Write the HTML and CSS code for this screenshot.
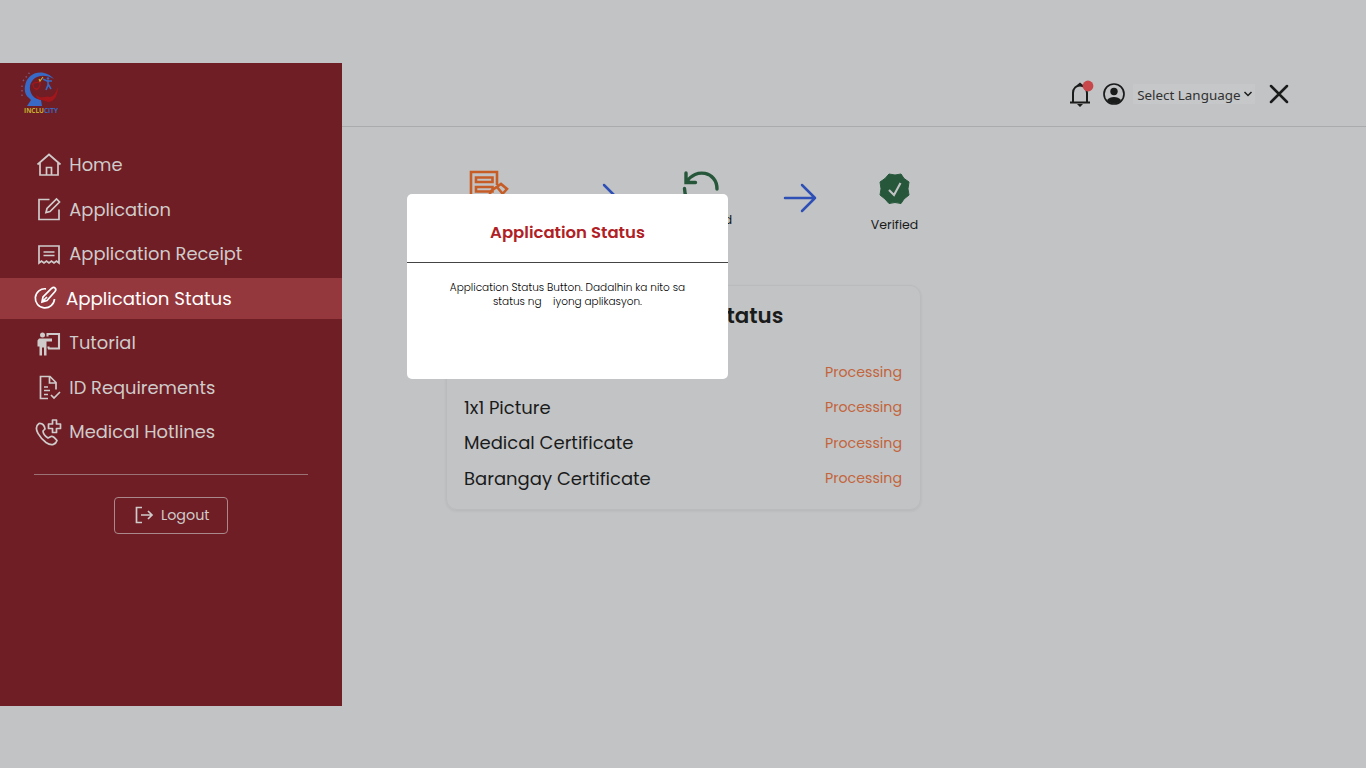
FILE: index.html
```html
<!DOCTYPE html>
<html lang="en">
<head>
<meta charset="utf-8">
<title>Application Status</title>
<link rel="stylesheet" href="styles.css">
</head>
<body>
<div class="app">
  <aside class="sidebar">
    <div class="brand">
      <svg class="logo" width="42" height="46" viewBox="0 0 42 46">
        <path d="M36 9C27-2 9 1 7 16c-1 6 1 10 4 12l2 2-4 6h15l-1-6c-5-1-8-3-10-7C8 12 20 0 36 9Z" fill="#386ac5"/>
        <path d="M18 25c6 5 10 0 13 2 5 0 7-5 9-10 0 7-3 15-10 15l-6-2c-3 0-6-2-6-5Z" fill="#a1171c"/>
        <path d="M14 15c2-5 6 0 7-4 3 4-1 9-4 9M15 14c0 5 2 5 4 4" fill="none" stroke="#a1171c" stroke-width="1.2"/>
        <path d="m21 9 1 2 3-4" fill="none" stroke="#c6ae31" stroke-width="1.2"/>
        <circle cx="30" cy="8.500" r="1.3" fill="#386ac5"/>
        <path d="m25 9 4 2h5M30 10v5l-2 5M30 14l3 5" fill="none" stroke="#386ac5" stroke-width="1.6"/>
        <path d="M4 26V14M5 11l7-9" fill="none" stroke="#7d5471" stroke-width="1.5" stroke-dasharray="1.5 3"/>
        <text x="6" y="43" class="logo-text" textLength="20" lengthAdjust="spacingAndGlyphs" fill="#c6ae31">INCLU</text>
        <text x="26" y="43" class="logo-text" textLength="14" lengthAdjust="spacingAndGlyphs" fill="#386ac5">CITY</text>
      </svg>
    </div>
    <nav class="menu">
      <a class="item home"><svg width="26" height="26" viewBox="0 0 26 26"><path d="m1.500 12.500 11.500-10 11.500 10M4 10.500V23h18V10.500M10.500 23v-7.500h5V23"/></svg><span>Home</span></a>
      <a class="item application"><svg width="26" height="26" viewBox="0 0 26 26"><path d="M13.500 3.500H3V23.500h20V13.500M10 16.500l1-4L20.500 3l3 3L14 15.500Z"/></svg><span>Application</span></a>
      <a class="item receipt"><svg width="26" height="26" viewBox="0 0 26 26"><path d="M3 5h20v17l-2.500-2-2.500 2-2.500-2-2.500 2-2.500-2-2.500 2-2.500-2L3 22ZM7.500 11h11M7.500 14.500h11"/></svg><span>Application Receipt</span></a>
      <a class="item active"><svg width="26" height="26" viewBox="0 0 26 26"><path d="M13 3.800A9.600 9.600 0 1 0 21.500 14M9 17l1-5 8.500-8.500c3-2.500 5.500.500 3.500 3L14 15.500ZM9 17l5-5"/></svg><span>Application Status</span></a>
      <a class="item tutorial"><svg width="26" height="26" viewBox="0 0 26 26"><circle class="solid" cx="6.500" cy="5" r="2.500"/><path class="solid" d="M3 8.500h13v3h-5.500v14H8v-8H6v8H3.500v-9H1.500v-6Z"/><path class="thick" d="M10.500 4h12.500v14.500H12M11.500 4v2.500M12.500 18.500v-2"/></svg><span>Tutorial</span></a>
      <a class="item requirements"><svg width="26" height="26" viewBox="0 0 26 26"><path d="M12 24.500H4.500V2.500h9.500l6 6v7M13.500 3v6H20M8 13h4M8 16.500h6M8 20.500h4M15 21l3 3 6-6"/></svg><span>ID Requirements</span></a>
      <a class="item hotlines"><svg width="28" height="28" viewBox="0 0 28 28"><path d="M5 5.500c-7 5 2 15 7 19 6 4 10 1.500 11-2q-4-5-6-4l-3 1.500c-3-2-5-5-5-7l2-2q-1-6-6-5.500ZM18.500 2h4v4h4v4.500h-4v4h-4v-4h-4V6h4Z" stroke-linejoin="round"/></svg><span>Medical Hotlines</span></a>
    </nav>
    <div class="divider"></div>
    <button class="logout"><svg width="20" height="20" viewBox="0 0 20 20"><path d="M8 2.500H2.500v15H8M7 10h10.500M14 6l4 4-4 4"/></svg><span>Logout</span></button>
  </aside>
  <main class="main">
    <header class="topbar">
      <svg class="bell" width="28" height="30" viewBox="0 0 28 30"><path d="M3 23.500h20M6 23V14c0-10 14-10 14 0v9" fill="none" stroke="#1a1b1b" stroke-width="2"/><path d="M10 25h6l-3 3ZM10 6l3-2.500 3 2.500Z" fill="#1a1b1b"/><circle cx="21" cy="7" r="5.400" fill="#c8474b"/></svg>
      <svg class="user" width="24" height="24" viewBox="0 0 24 24"><circle cx="12" cy="12" r="10" fill="none" stroke="#1a1b1b" stroke-width="1.700"/><circle cx="12" cy="9.500" r="3.700" fill="#1a1b1b"/><path d="M5 18c3-4 11-4 14 0-3 5-11 5-14 0Z" fill="#1a1b1b"/></svg>
      <div class="language"><span>Select Language</span><svg width="10" height="8" viewBox="0 0 10 8"><path d="m1.500 2 3.500 3.500L8.500 2" fill="none" stroke="#1a1b1b" stroke-width="1.500"/></svg></div>
      <svg class="close" width="20" height="20" viewBox="0 0 20 20"><path d="m2 2 16 16M18 2 2 18" fill="none" stroke="#1a1b1b" stroke-width="2.500" stroke-linecap="round"/></svg>
    </header>
    <section class="steps">
      <div class="step form"><svg width="42" height="42" viewBox="0 0 42 42"><path d="M29 16V3H3v36h20M8 8.500h16.500v4.500H8ZM8 18h16.500v4.500H8ZM20 30l3-8 10-7 6 5-10 11ZM29 18l5 6" fill="none" stroke="#c65d27" stroke-width="2.600"/></svg></div>
      <div class="arrow first"><svg width="34" height="30" viewBox="0 0 34 30"><path d="M2 15h30M19 2l13 13-13 13" fill="none" stroke="#2e4fb5" stroke-width="2.500" stroke-linecap="round" stroke-linejoin="round"/></svg></div>
      <div class="step review"><svg width="40" height="40" viewBox="0 0 40 40"><path d="M5 3v9.500h9.500M6 11.500C14-2 36 1 36 19M3.500 18.500c0 15 17 22 28 12" fill="none" stroke="#26573a" stroke-width="3.400" stroke-linecap="round"/></svg><span>Reviewed</span></div>
      <div class="arrow"><svg width="34" height="30" viewBox="0 0 34 30"><path d="M2 15h30M19 2l13 13-13 13" fill="none" stroke="#2e4fb5" stroke-width="2.500" stroke-linecap="round" stroke-linejoin="round"/></svg></div>
      <div class="step verified"><svg width="34" height="34" viewBox="0 0 34 34"><path d="M11 2q6 2 12 0l3 4.500 5 3.500q-2 7 0 13l-5 4-3 4.500q-6-2-12 0l-4-4.500-5-4q2-6 0-13l5-3.500Z" fill="#26573a" stroke="#26573a" stroke-linejoin="round"/><path d="m11 18 5 5L22.500 11" fill="none" stroke="#c2c3c5" stroke-width="2.100"/></svg><span>Verified</span></div>
    </section>
    <section class="card">
      <h2>Application Status</h2>
      <div class="row"><span></span><b>Processing</b></div>
      <div class="row picture"><span>1x1 Picture</span><b>Processing</b></div>
      <div class="row medical"><span>Medical Certificate</span><b>Processing</b></div>
      <div class="row barangay"><span>Barangay Certificate</span><b>Processing</b></div>
    </section>
  </main>
</div>
<div class="modal">
  <h1>Application Status</h1>
  <p><span class="line-one">Application Status Button. Dadalhin ka nito sa</span><br><span class="line-two">status ng &nbsp;&nbsp;&nbsp;iyong aplikasyon.</span></p>
</div>
</body>
</html>
```
FILE: styles.css
```css
* { box-sizing: border-box; }
body { margin: 0; width: 1366px; height: 768px; overflow: hidden; padding-top: 62.5px; background: #c2c3c5; font-family: Poppins, Inter, sans-serif; color: #1a1b1b; }
svg { display: block; flex: none; }
.app { display: flex; height: 643.5px; }
.sidebar { width: 341.5px; flex: none; background: #6e1e24; color: #d0cbcb; }
.brand { height: 82.100px; padding: 7px 0 0 18px; }
.logo-text { font-family: "Open Sans", sans-serif; font-size: 7px; font-weight: 700; }
.menu { display: flex; flex-direction: column; gap: 4px; }
.item { height: 40.5px; display: flex; align-items: center; padding-left: 36px; gap: 7.300px; font-size: 17.850px; white-space: nowrap; }
.item svg, .logout svg { fill: none; stroke: currentColor; stroke-width: 1.7; }
.item .solid { fill: currentColor; stroke: none; }
.item .thick { stroke-width: 2.1; }
.active { background: #95383e; color: #fff; padding-left: 32.700px; font-size: 18.200px; }
.hotlines { padding-left: 34px; }
.divider { width: 273.5px; height: 1px; margin: 21.900px 0 0 34px; background: #9b7377; }
.logout { display: flex; align-items: center; gap: 7px; width: 114px; height: 37px; margin: 22px 0 0 114px; padding: 0 0 0 19px; border: 1px solid #ab888b; border-radius: 4px; background: transparent; color: #d0cbcb; font: 14.300px Poppins, Inter, sans-serif; }
.main { flex: 1; min-width: 0; }
.topbar { height: 64px; display: flex; align-items: center; padding-left: 725.200px; border-bottom: 1.5px solid #aaabad; }
.user { margin-left: 7px; }
.language { display: flex; align-items: center; gap: 3px; width: 122px; height: 20px; margin-left: 7.500px; padding-left: 4px; background: #c6c7c8; font-family: "Noto Sans", sans-serif; font-size: 13.400px; color: #303132; white-space: nowrap; }
.language span { padding-top: 2px; }
.close { margin-left: 14px; }
.steps { display: flex; height: 158px; padding: 42px 0 0 126.500px; }
.step { display: flex; flex-direction: column; align-items: center; font-size: 12.500px; line-height: 18px; }
.form { width: 42px; }
.arrow { width: 34px; margin-top: 14px; }
.arrow.first { margin-left: 75px; }
.review { width: 64px; margin: 1px 50px 0 50px; }
.review span { margin-top: 1px; padding-left: 3px; }
.verified { width: 50px; margin: 3px 0 0 52.500px; gap: 10px; }
.card { width: 475px; height: 225px; margin-left: 104px; padding: 13px 17.500px; border: 1px solid #babbbd; border-radius: 11px; box-shadow: 0 1px 3px rgba(0,0,0,.07); }
.card h2 { margin: 0 0 21.300px; height: 34px; line-height: 34px; text-align: center; font-size: 21.400px; font-weight: 600; }
.row { height: 35.6px; display: flex; align-items: center; justify-content: space-between; font-size: 18px; }
.row b { padding-top: 1px; font-size: 14.200px; font-weight: 400; color: #c3643a; }
.modal { position: absolute; left: 407px; top: 194px; width: 321px; height: 185px; border-radius: 5px; background: #fff; text-align: center; white-space: nowrap; color: #000; }
.modal h1 { height: 69px; margin: 0; padding-top: 8px; border-bottom: 1px solid #444; color: #b02024; font-size: 16.500px; line-height: 62px; font-weight: 600; }
.modal p { margin: 18px 0 0; font-size: 10.500px; line-height: 14px; font-weight: 300; }
```
